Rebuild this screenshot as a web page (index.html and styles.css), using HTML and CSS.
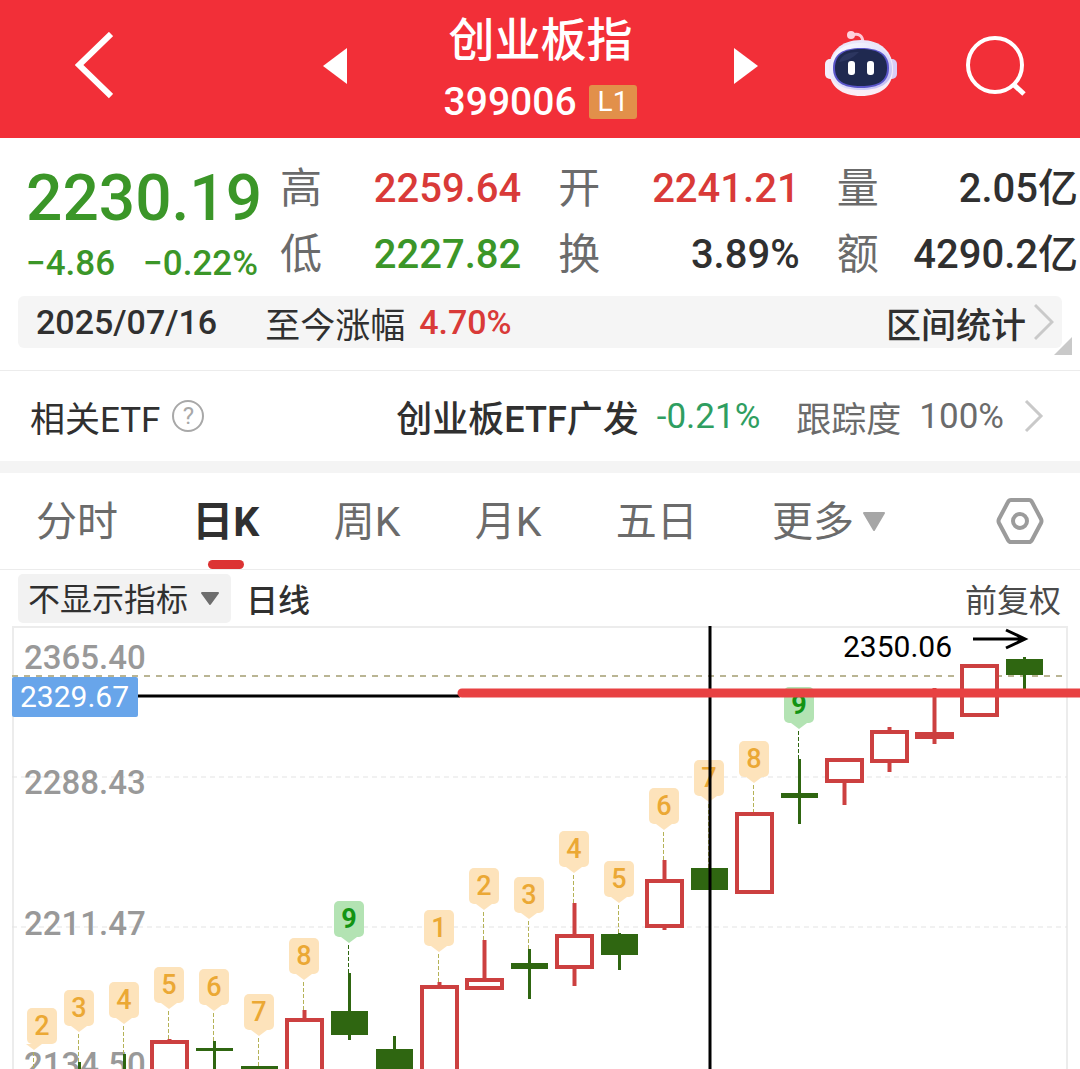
FILE: index.html
```html
<!DOCTYPE html>
<html lang="zh-CN">
	<head>
		<meta charset="UTF-8" />
		<meta name="viewport" content="width=device-width, initial-scale=1.0" />
		<title>创业板指 399006</title>
		<link rel="stylesheet" href="styles.css">
	</head>
	<body>
		<header class="topbar">
			<button class="icon-btn back" aria-label="返回">
				<svg width="38" height="68" viewBox="0 0 38 68">
					<path d="M36 2 L4 33 L36 64" fill="none" stroke="#fff" stroke-width="6" />
				</svg>
			</button>
			<div class="stock">
				<button class="icon-btn" aria-label="上一个">
					<svg width="24" height="36" viewBox="0 0 24 36"><path d="M24 0 V36 L0 18 Z" fill="#fff" /></svg>
				</button>
				<div class="stock-name">
					<h1>创业板指</h1>
					<p class="stock-code">399006 <span class="level">L1</span></p>
				</div>
				<button class="icon-btn" aria-label="下一个">
					<svg width="24" height="36" viewBox="0 0 24 36"><path d="M0 0 V36 L24 18 Z" fill="#fff" /></svg>
				</button>
			</div>
			<div class="actions">
				<button class="icon-btn" aria-label="智能助手">
					<svg width="72" height="72" viewBox="0 0 72 72">
						<defs>
							<linearGradient id="shell" x1="0" y1="0" x2="1" y2="1">
								<stop offset="0" stop-color="#fff" />
								<stop offset="0.5" stop-color="#e4e2fb" />
								<stop offset="1" stop-color="#b9b4f2" />
							</linearGradient>
							<linearGradient id="rim" x1="0" y1="0" x2="0" y2="1">
								<stop offset="0" stop-color="#e9e6fa" />
								<stop offset="1" stop-color="#fbeef6" />
							</linearGradient>
						</defs>
						<path d="M27 5 Q37 2 38 12" fill="none" stroke="#ffc9d6" stroke-width="3" />
						<circle cx="26" cy="5" r="4" fill="#ffd3dd" />
						<rect x="0" y="29" width="12" height="20" rx="5" fill="#f3effc" />
						<rect x="60" y="29" width="12" height="20" rx="5" fill="#d9cdf7" />
						<path d="M36 10 C56 10 68 22 68 39 C68 57 55 66 36 66 C17 66 4 57 4 39 C4 22 16 10 36 10 Z" fill="url(#rim)" />
						<path d="M36 13 C54 13 67 23 67 39 C67 54 54 60 36 60 C18 60 5 54 5 39 C5 23 18 13 36 13 Z" fill="url(#shell)" />
						<path d="M36 18 C54 18 64 24 64 38 C64 52 54 58 36 58 C18 58 8 52 8 38 C8 24 18 18 36 18 Z" fill="#5a55c9" />
						<path d="M36 19 C53 19 62 25 62 38 C62 51 53 56 36 56 C19 56 10 51 10 38 C10 25 19 19 36 19 Z" fill="#1f2950" />
						<path d="M14 32 C17 24 24 22 34 22 C28 28 22 31 14 32 Z" fill="#2c3660" />
						<rect x="23" y="31" width="7" height="14" rx="3" fill="#fff" />
						<rect x="42" y="31" width="7" height="14" rx="3" fill="#fff" />
					</svg>
				</button>
				<button class="icon-btn" aria-label="搜索">
					<svg width="60" height="60" viewBox="0 0 60 60">
						<circle cx="29" cy="29" r="27" fill="none" stroke="#fff" stroke-width="4" />
						<path d="M47 48 L58 58" stroke="#fff" stroke-width="5" />
					</svg>
				</button>
			</div>
		</header>

		<main>
			<section class="quote">
				<div class="quote-main">
					<div class="price-box">
						<p class="price">2230.19</p>
						<p class="change"><span>−4.86</span><span>−0.22%</span></p>
					</div>
					<dl class="stats">
						<div><dt>高</dt><dd class="up">2259.64</dd></div>
						<div><dt>开</dt><dd class="up">2241.21</dd></div>
						<div><dt>量</dt><dd>2.05亿</dd></div>
						<div><dt>低</dt><dd class="down">2227.82</dd></div>
						<div><dt>换</dt><dd>3.89%</dd></div>
						<div><dt>额</dt><dd>4290.2亿</dd></div>
					</dl>
				</div>
				<div class="range">
					<span class="range-date">2025/07/16</span>
					<span class="range-label">至今涨幅</span>
					<span class="range-value up">4.70%</span>
					<a class="range-link" href="#">区间统计
						<svg width="20" height="38" viewBox="0 0 20 38"><path d="M1 2 L18 19 L1 36" fill="none" stroke="#c9c9c9" stroke-width="3" /></svg>
					</a>
					<svg class="corner" width="18" height="18" viewBox="0 0 18 18"><path d="M18 0 V18 H0 Z" fill="#c9c9c9" /></svg>
				</div>
			</section>

			<section class="etf">
				<span class="etf-title">相关ETF</span>
				<button class="help" aria-label="说明">?</button>
				<a class="etf-link" href="#">
					<b>创业板ETF广发</b>
					<span class="etf-change">-0.21%</span>
					<span class="etf-track">跟踪度</span>
					<span class="etf-percent">100%</span>
					<svg width="20" height="34" viewBox="0 0 20 34"><path d="M2 2 L17 17 L2 32" fill="none" stroke="#c9c9c9" stroke-width="3" /></svg>
				</a>
			</section>

			<nav class="periods">
				<div class="tabs">
					<button class="tab">分时</button>
					<button class="tab active">日K</button>
					<button class="tab">周K</button>
					<button class="tab">月K</button>
					<button class="tab">五日</button>
					<button class="tab">更多
						<svg width="24" height="20" viewBox="0 0 24 20"><path d="M2 1 H22 L12 18 Z" fill="#a6a6a6" stroke="#a6a6a6" stroke-width="2" stroke-linejoin="round" /></svg>
					</button>
				</div>
				<button class="icon-btn" aria-label="设置">
					<svg width="48" height="48" viewBox="0 0 48 48" fill="none" stroke="#9b9b9b" stroke-width="4">
						<path d="M15 3 H33 Q35 3 36 5 L45 22 Q46 24 45 26 L36 43 Q35 45 33 45 H15 Q13 45 12 43 L3 26 Q2 24 3 22 L12 5 Q13 3 15 3 Z" />
						<circle cx="24" cy="24" r="7" />
					</svg>
				</button>
			</nav>

			<section class="toolbar">
				<div class="indicator">
					<select id="indicator" aria-label="指标">
						<option>不显示指标</option>
					</select>
					<svg class="indicator-arrow" width="20" height="16" viewBox="0 0 20 16"><path d="M2 2 H18 L10 13 Z" fill="#6e6e6e" stroke="#6e6e6e" stroke-width="2" stroke-linejoin="round" /></svg>
				</div>
				<span class="line-type">日线</span>
				<button class="adjust">前复权</button>
			</section>

			<svg id="chart" class="chart" viewBox="0 0 1080 443" role="img" aria-label="日K线图">
				<path class="frame" d="M13 443 V1 H1067 V443" />
				<path class="grid" d="M12 151 H1067 M12 301 H1067" />
				<path class="last-price" d="M12 50 H1067" />
				<g class="axis">
					<text x="24" y="43">2365.40</text>
					<text x="24" y="168">2288.43</text>
					<text x="24" y="309">2211.47</text>
					<text x="24" y="450">2134.50</text>
				</g>
				<g id="candles"></g>
				<path class="cross" d="M138 70 H460 M710 0 V443" />
				<text class="peak" x="843" y="31">2350.06</text>
				<path class="arrow" d="M973 13 H1024 M1006 4 L1025 13 L1006 22" />
				<path class="trend" d="M462 67 H1090" />
				<rect x="12" y="51" width="126" height="40" rx="2" fill="#68a5ea" />
				<text class="cursor-price" x="20" y="81">2329.67</text>
			</svg>
		</main>

		<script src="chart.js"></script>
	</body>
</html>
```
FILE: styles.css
```css
* {
	box-sizing: border-box;
	margin: 0;
	padding: 0;
}

body {
	background-color: #fff;
	color: #303030;
	font-family: Roboto, 'Noto Sans CJK SC', sans-serif;
	overflow-x: hidden;
}

button,
select {
	font-family: inherit;
	border: none;
	background: none;
	color: inherit;
	cursor: pointer;
}

a {
	color: inherit;
	text-decoration: none;
}

svg {
	display: block;
	flex: none;
}

.up {
	color: #d93a38;
}

.down {
	color: #3b9628;
}

.icon-btn {
	display: flex;
}

/* top bar */
.topbar {
	display: grid;
	grid-template-columns: 1fr 436px 1fr;
	align-items: center;
	height: 138px;
	padding: 0 54px 6px 75px;
	background-color: #f22f38;
	color: #fff;
}

.stock {
	display: flex;
	justify-content: space-between;
	align-items: center;
	margin-left: -10px;
	margin-right: 10px;
}

.stock-name {
	padding-top: 8px;
	text-align: center;
}

.stock-name h1 {
	font-size: 46px;
	font-weight: 500;
	line-height: 64px;
}

.stock-code {
	display: flex;
	align-items: center;
	justify-content: center;
	gap: 12px;
	font-size: 39px;
	font-weight: 500;
	line-height: 60px;
}

.level {
	padding: 0 9px;
	border-radius: 3px;
	background-color: #e2904a;
	font-size: 28px;
	font-weight: 400;
	line-height: 34px;
}

.actions {
	display: flex;
	justify-content: flex-end;
	align-items: center;
	gap: 69px;
}

/* quote */
.quote {
	padding-bottom: 22px;
	border-bottom: 1px solid #ececec;
}

.quote-main {
	display: flex;
	padding: 18px 2px 0 26px;
	height: 158px;
}

.price-box {
	width: 254px;
	color: #3b9628;
}

.price {
	font-size: 64px;
	font-weight: 500;
	line-height: 86px;
}

.change {
	display: flex;
	gap: 28px;
	font-size: 35px;
	font-weight: 500;
	line-height: 44px;
}

.stats {
	flex: 1;
	display: grid;
	grid-template-columns: repeat(3, 1fr);
	align-content: start;
	column-gap: 37px;
}

.stats div {
	display: flex;
	justify-content: space-between;
	font-size: 40px;
	line-height: 66px;
	white-space: nowrap;
}

.stats dt {
	color: #6b6b6b;
	font-size: 42px;
}

.stats dd {
	font-weight: 500;
}

.range {
	position: relative;
	display: flex;
	align-items: center;
	height: 52px;
	margin: 0 18px;
	padding: 0 8px 0 18px;
	border-radius: 6px;
	background-color: #f5f5f5;
	font-size: 35px;
}

.range-date {
	margin-right: 48px;
	font-size: 34px;
	font-weight: 500;
}

.range-value {
	margin-left: 14px;
	font-size: 34px;
	font-weight: 500;
}

.range-link {
	display: flex;
	align-items: center;
	gap: 8px;
	margin-left: auto;
	font-weight: 500;
}

.corner {
	position: absolute;
	right: -10px;
	bottom: -7px;
}

/* related etf */
.etf {
	display: flex;
	align-items: center;
	height: 102px;
	padding: 0 36px 0 30px;
	border-bottom: 12px solid #f4f4f4;
	font-size: 35px;
}

.help {
	width: 32px;
	height: 32px;
	margin-left: 12px;
	border: 2px solid #a8a8a8;
	border-radius: 50%;
	color: #a8a8a8;
	font-size: 24px;
	line-height: 28px;
}

.etf-link {
	display: flex;
	align-items: center;
	margin-left: auto;
}

.etf-link b {
	font-size: 36px;
	font-weight: 500;
}

.etf-change {
	margin: 0 36px 0 18px;
	color: #2f9e61;
}

.etf-track,
.etf-percent {
	color: #6b6b6b;
}

.etf-track {
	margin-right: 18px;
}

.etf-percent {
	margin-right: 20px;
}

/* period tabs */
.periods {
	display: flex;
	align-items: center;
	height: 97px;
	padding: 0 36px;
	border-bottom: 1px solid #ececec;
}

.tabs {
	flex: 1;
	display: flex;
	justify-content: space-between;
	margin-right: 110px;
}

.tab {
	position: relative;
	display: flex;
	align-items: center;
	gap: 8px;
	padding-top: 2px;
	color: #6b6b6b;
	font-size: 41px;
	line-height: 94px;
}

.tab.active {
	color: #303030;
	font-weight: 700;
}

.tab.active::after {
	content: '';
	position: absolute;
	left: 50%;
	bottom: 0;
	width: 36px;
	height: 9px;
	margin-left: -18px;
	border-radius: 5px;
	background-color: #dc3333;
}

/* chart toolbar */
.toolbar {
	display: flex;
	align-items: center;
	height: 56px;
	padding: 0 19px 0 18px;
	font-size: 32px;
}

.indicator {
	position: relative;
}

.indicator select {
	appearance: none;
	width: 213px;
	height: 49px;
	padding: 4px 0 0 10px;
	border-radius: 5px;
	background-color: #f2f2f2;
	font-size: 32px;
}

.indicator-arrow {
	position: absolute;
	right: 11px;
	top: 17px;
	pointer-events: none;
}

.line-type {
	margin-left: 15px;
	font-weight: 500;
}

.adjust {
	margin-left: auto;
	color: #4a4a4a;
	font-size: 32px;
}

/* chart */
.chart {
	width: 100%;
	overflow: hidden;
}

.frame {
	fill: none;
	stroke: #ececec;
	stroke-width: 2;
}

.grid {
	stroke: #e3e3e3;
	stroke-dasharray: 5 4;
}

.last-price {
	stroke: #bab594;
	stroke-width: 2;
	stroke-dasharray: 6 6;
}

.axis {
	fill: #999;
	font-size: 33px;
	font-weight: 500;
}

.peak,
.cursor-price {
	font-size: 30px;
}

.cursor-price {
	fill: #fff;
}

.cross {
	stroke: #000;
	stroke-width: 3;
}

.arrow {
	fill: none;
	stroke: #000;
	stroke-width: 3;
}

.trend {
	stroke: #e84142;
	stroke-width: 9;
	stroke-linecap: round;
}

.rise {
	fill: #fff;
	stroke: #cc4040;
	stroke-width: 4;
}

.fall {
	fill: #2f6611;
}

.wick-rise {
	stroke: #cc4040;
	stroke-width: 4;
}

.wick-fall {
	stroke: #2f6611;
	stroke-width: 3;
}

.stem {
	stroke: #b5b257;
	stroke-dasharray: 4 2;
}

.tag {
	fill: #fde3bb;
}

.tag-text {
	fill: #eba834;
	font-size: 27px;
	font-weight: 500;
	text-anchor: middle;
}

.nine .stem {
	stroke: #2f6611;
}

.nine .tag {
	fill: #b3e3b3;
}

.nine .tag-text {
	fill: #129412;
	font-weight: 700;
}
```
FILE: chart.js
```javascript
// x, rise, body top, body bottom, wick top, wick bottom, tag number, tag top
const candles = [
	[35, false, 460, 470, 450, 460, 2, 382],
	[80, false, 450, 470, 436, 470, 3, 364],
	[125, false, 450, 470, 428, 470, 4, 356],
	[170, true, 414, 460, 413, 460, 5, 341],
	[215, false, 422, 425, 415, 460, 6, 343],
	[260, false, 440, 460, 440, 460, 7, 368],
	[305, true, 392, 460, 384, 460, 8, 312],
	[350, false, 385, 409, 347, 414, 9, 275],
	[395, false, 423, 460, 410, 460],
	[440, true, 359, 460, 356, 460, 1, 284],
	[485, true, 352, 364, 314, 352, 2, 242],
	[530, false, 337, 343, 323, 373, 3, 251],
	[575, true, 308, 343, 277, 360, 4, 205],
	[620, false, 308, 329, 307, 344, 5, 235],
	[665, true, 253, 302, 234, 304, 6, 162],
	[710, false, 242, 264, 242, 264, 7, 134],
	[755, true, 186, 268, 186, 268, 8, 115],
	[800, false, 167, 172, 133, 198, 9, 61],
	[845, true, 132, 157, 132, 179],
	[890, true, 104, 137, 101, 146],
	[935, true, 106, 113, 62, 118],
	[980, true, 38, 91, 38, 91],
	[1025, false, 33, 49, 31, 64],
]

function drawTag(x, number, top, wickTop) {
	const center = Math.max(x, 42)
	const left = center - 15
	const bottom = top + 36
	const group = number === 9 ? 'nine' : ''
	return `<g class="${group}">
		<path class="stem" d="M${x - 0.5} ${bottom + 8} V${wickTop}" />
		<rect class="tag" x="${left}" y="${top}" width="30" height="${bottom - top}" rx="5" />
		<path class="tag" d="M${x - 8} ${bottom} h16 l-8 6 Z" />
		<text class="tag-text" x="${center}" y="${top + 27}">${number}</text>
	</g>`
}

function drawCandle([x, rise, top, bottom, wickTop, wickBottom, number, tagTop]) {
	let html = ''
	const wick = rise ? 'wick-rise' : 'wick-fall'
	html += `<path class="${wick}" d="M${x - 0.5} ${wickTop} V${wickBottom}" />`
	if (rise) {
		html += `<rect class="rise" x="${x - 18}" y="${top + 2}" width="35" height="${bottom - top - 4}" />`
	} else {
		html += `<rect class="fall" x="${x - 19}" y="${top}" width="37" height="${bottom - top}" />`
	}
	if (number) {
		html += drawTag(x - 1, number, tagTop, wickTop)
	}
	return html
}

document.getElementById('candles').innerHTML = candles.map(drawCandle).join('')
```
